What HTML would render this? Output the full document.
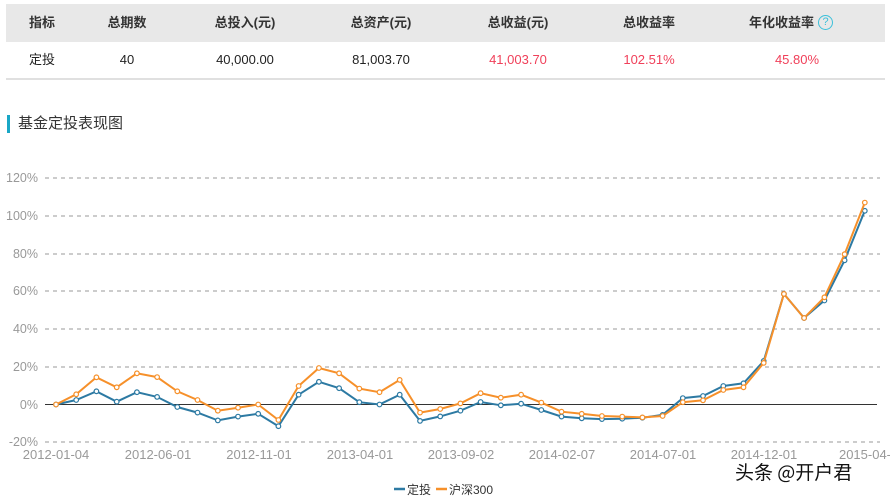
<!DOCTYPE html>
<html><head><meta charset="utf-8"><style>
body{margin:0;width:890px;height:499px;background:#fff;font-family:"Liberation Sans","Noto Sans CJK SC",sans-serif;position:relative;overflow:hidden}
.t{position:absolute;left:6px;top:4px;width:879px}
.h{height:38px;background:#e8e8e8;position:relative}
.r{height:36px;border-bottom:2px solid #e0e0e0;position:relative}
.c{position:absolute;top:0;transform:translateX(-50%);white-space:nowrap;font-size:13px}
.h .c{line-height:38px;font-weight:bold;color:#333}
.r .c{line-height:36px;color:#222}
.red{color:#f0405a!important}
.q{display:inline-block;width:13px;height:13px;border:1.5px solid #3cc0da;border-radius:50%;color:#3cc0da;font-size:11px;line-height:13px;text-align:center;font-weight:normal;vertical-align:middle;margin-left:4px;margin-top:-2px}
.title{position:absolute;left:7px;top:115px;height:18px;border-left:3px solid #19a7c6;padding-left:8px;font-size:15px;line-height:18px;color:#333}
.wm{position:absolute;left:735px;top:458px;font-size:19px;color:#111;text-shadow:0 0 2px #fff,0 0 2px #fff;font-family:"Noto Sans CJK SC",sans-serif}
</style></head><body>
<div class="t">
<div class="h">
<span class="c" style="left:36px">指标</span>
<span class="c" style="left:121px">总期数</span>
<span class="c" style="left:239px">总投入(元)</span>
<span class="c" style="left:375px">总资产(元)</span>
<span class="c" style="left:512px">总收益(元)</span>
<span class="c" style="left:643px">总收益率</span>
<span class="c" style="left:785px">年化收益率<span class="q">?</span></span>
</div>
<div class="r">
<span class="c" style="left:36px">定投</span>
<span class="c" style="left:121px">40</span>
<span class="c" style="left:239px">40,000.00</span>
<span class="c" style="left:375px">81,003.70</span>
<span class="c red" style="left:512px">41,003.70</span>
<span class="c red" style="left:643px">102.51%</span>
<span class="c red" style="left:791px">45.80%</span>
</div>
</div>
<div class="title">基金定投表现图</div>
<svg width="890" height="499" style="position:absolute;left:0;top:0" font-family="Liberation Sans, sans-serif">
<defs>
<marker id="mb" markerWidth="8" markerHeight="8" refX="4" refY="4" markerUnits="userSpaceOnUse"><circle cx="4" cy="4" r="2.3" fill="#fff" stroke="#2d7aa3" stroke-width="1.2"/></marker>
<marker id="mo" markerWidth="8" markerHeight="8" refX="4" refY="4" markerUnits="userSpaceOnUse"><circle cx="4" cy="4" r="2.3" fill="#fff" stroke="#f6902a" stroke-width="1.2"/></marker>
</defs>
<g stroke="#999" stroke-dasharray="4,4" stroke-width="1">
<line x1="45" y1="178" x2="880" y2="178"/><line x1="45" y1="216" x2="880" y2="216"/><line x1="45" y1="254" x2="880" y2="254"/><line x1="45" y1="291" x2="880" y2="291"/><line x1="45" y1="329" x2="880" y2="329"/><line x1="45" y1="367" x2="880" y2="367"/><line x1="45" y1="442" x2="880" y2="442"/>
</g>
<line x1="45" y1="404.5" x2="877" y2="404.5" stroke="#333" stroke-width="1"/>
<g fill="#999" font-size="12.5" text-anchor="end">
<text x="38" y="182">120%</text><text x="38" y="220">100%</text><text x="38" y="258">80%</text><text x="38" y="295">60%</text><text x="38" y="333">40%</text><text x="38" y="371">20%</text><text x="38" y="409">0%</text><text x="38" y="446">-20%</text>
</g>
<g fill="#999" font-size="13" text-anchor="middle">
<text x="56" y="459">2012-01-04</text><text x="158" y="459">2012-06-01</text><text x="259" y="459">2012-11-01</text><text x="360" y="459">2013-04-01</text><text x="461" y="459">2013-09-02</text><text x="562" y="459">2014-02-07</text><text x="663" y="459">2014-07-01</text><text x="764" y="459">2014-12-01</text><text x="865" y="459">2015-04-</text>
</g>
<polyline fill="none" stroke="#2d7aa3" stroke-width="2" marker-start="url(#mb)" marker-mid="url(#mb)" marker-end="url(#mb)" points="56,404.5 76.2,400 96.4,391.3 116.7,401.7 136.9,392.2 157.1,396.9 177.3,407 197.5,412.6 217.8,420.4 238,416.6 258.2,413.8 278.4,426.2 298.6,394.7 318.9,381.8 339.1,388.2 359.3,402.2 379.5,404.5 399.7,394.7 420,420.9 440.2,416.4 460.4,410.7 480.6,402 500.8,405.3 521.1,403.7 541.3,410 561.5,416.6 581.7,418.3 601.9,419.1 622.2,418.7 642.4,417.7 662.6,414.9 682.8,398.1 703,396 723.3,386 743.5,383.3 763.7,361 783.9,293.9 804.1,318 824.4,300.5 844.6,260.3 864.8,210.8"/>
<polyline fill="none" stroke="#f6902a" stroke-width="2" marker-start="url(#mo)" marker-mid="url(#mo)" marker-end="url(#mo)" points="56,404.5 76.2,394.3 96.4,377.3 116.7,387.3 136.9,373.3 157.1,377.1 177.3,391.3 197.5,400 217.8,410.7 238,407.7 258.2,404.5 278.4,420 298.6,386 318.9,368 339.1,373.3 359.3,388.6 379.5,392.2 399.7,379.9 420,412.6 440.2,409 460.4,403.4 480.6,393.2 500.8,397.7 521.1,394.7 541.3,402.6 561.5,411.7 581.7,413.8 601.9,416 622.2,416.6 642.4,417.4 662.6,416 682.8,402.2 703,400.3 723.3,390 743.5,387.3 763.7,362.9 783.9,293.9 804.1,318 824.4,297.3 844.6,254.2 864.8,202.6"/>
<line x1="394" y1="489" x2="405" y2="489" stroke="#2d7aa3" stroke-width="2.5"/>
<text x="407" y="494" font-size="12" fill="#333" font-family="Noto Sans CJK SC, sans-serif">定投</text>
<line x1="436" y1="489" x2="447" y2="489" stroke="#f6902a" stroke-width="2.5"/>
<text x="449" y="494" font-size="12" fill="#333" font-family="Liberation Sans, Noto Sans CJK SC, sans-serif">沪深300</text>
</svg>
<div class="wm">头条 @开户君</div>
</body></html>
